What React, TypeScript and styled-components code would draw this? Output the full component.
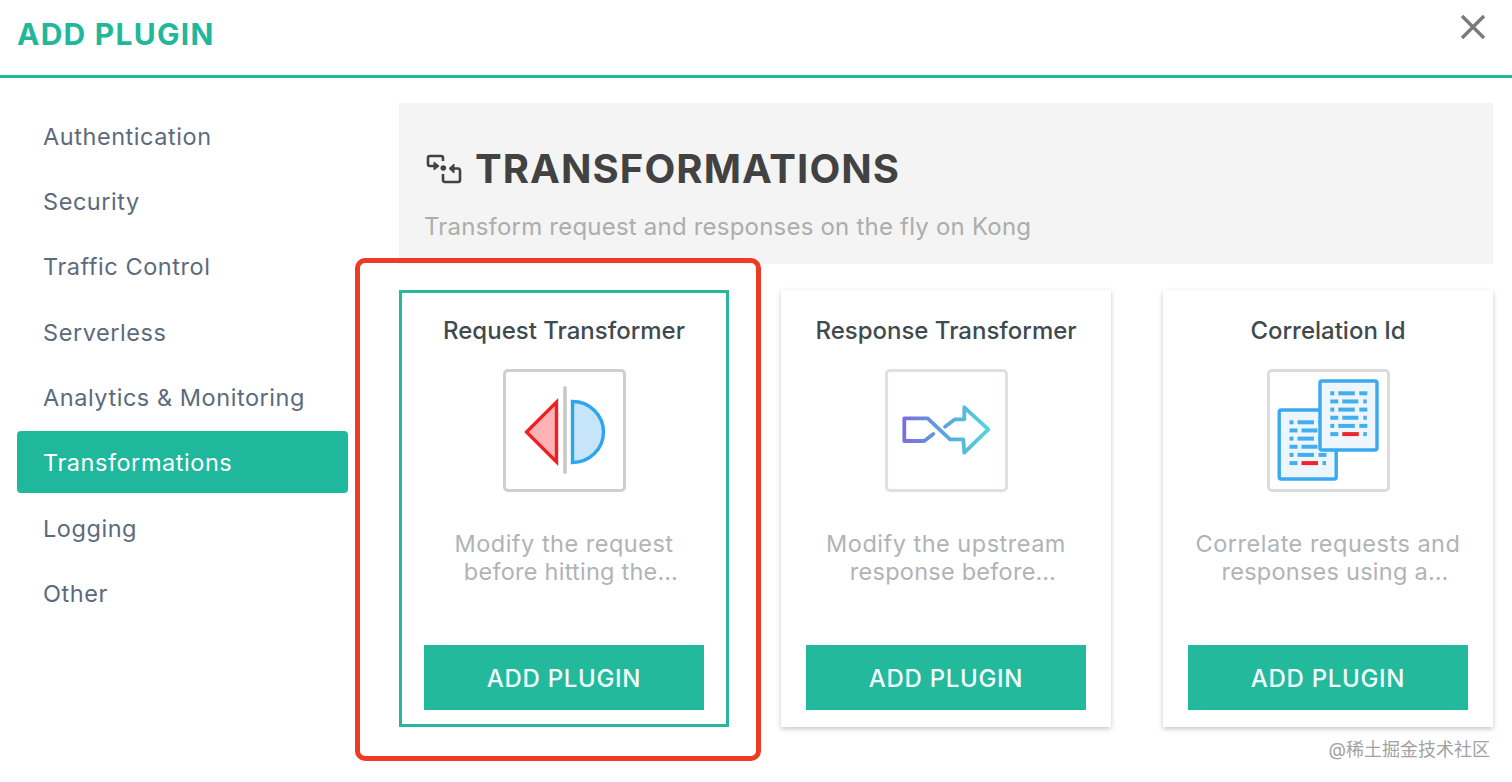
import React from "react";
import styled, { createGlobalStyle } from "styled-components";

const font = `Inter, "Noto Sans CJK SC", sans-serif`;

const Global = createGlobalStyle`
  html, body { margin: 0; padding: 0; background: #fff; }
  * { box-sizing: border-box; }
  body { font-family: ${font}; overflow: hidden; }
`;

const Page = styled.div`
  position: relative;
  width: 1512px;
  height: 782px;
  display: flex;
  flex-direction: column;
  background: #fff;
  overflow: hidden;
`;
const Header = styled.header`
  height: 78px;
  flex: none;
  border-bottom: 3px solid #20b89c;
  display: flex;
  align-items: flex-start;
  justify-content: space-between;
  padding: 15px 25px 0 17px;
`;
const Title = styled.h1`
  margin: 0;
  font-size: 30px;
  line-height: 38px;
  font-weight: 700;
  letter-spacing: 1.25px;
  color: #22b79b;
`;
const Close = styled.button`
  border: 0;
  background: none;
  padding: 0;
  margin-top: -2px;
  width: 28px;
  height: 28px;
  display: flex;
`;
const Body = styled.div`
  flex: 1;
  display: flex;
  min-height: 0;
`;
const Side = styled.nav`
  width: 399px;
  flex: none;
  padding: 26px 51px 0 17px;
  display: flex;
  flex-direction: column;
  gap: 3.4px;
`;
const SideItem = styled.div<{ $active?: boolean }>`
  height: 62px;
  flex: none;
  display: flex;
  align-items: center;
  padding: 2px 0 0 26px;
  border-radius: 4px;
  font-size: 23.5px;
  letter-spacing: 0.55px;
  font-weight: 400;
  color: ${(p) => (p.$active ? "#fff" : "#5c6a7d")};
  background: ${(p) => (p.$active ? "#20b89c" : "transparent")};
`;
const Main = styled.main`
  width: 1094px;
  flex: none;
  padding-top: 25px;
  display: flex;
  flex-direction: column;
  gap: 26px;
`;
const Hero = styled.section`
  height: 161px;
  flex: none;
  background: #f4f4f4;
  padding: 42px 25px 0;
`;
const HeroTitle = styled.h2`
  margin: 0;
  display: flex;
  align-items: center;
  gap: 13px;
  height: 48px;
  font-size: 40px;
  line-height: 48px;
  font-weight: 700;
  letter-spacing: 1.07px;
  color: #424242;
`;
const HeroMark = styled.svg`
  margin-left: 2px;
  flex: none;
`;
const HeroText = styled.p`
  margin: 17px 0 0;
  font-size: 24px;
  line-height: 34px;
  letter-spacing: 0.21px;
  color: #adadad;
`;
const Cards = styled.div`
  display: grid;
  grid-template-columns: repeat(3, 330px);
  justify-content: space-between;
`;
const Card = styled.article<{ $selected?: boolean }>`
  height: 437px;
  display: flex;
  flex-direction: column;
  align-items: center;
  background: #fff;
  border: ${(p) => (p.$selected ? "3px solid #2bb59c" : "0")};
  padding: ${(p) => (p.$selected ? "21px 22px 14px" : "24px 25px 17px")};
  box-shadow: ${(p) => (p.$selected ? "none" : "0 2px 5px rgba(0,0,0,0.22)")};
`;
const CardTitle = styled.h3`
  margin: 0;
  height: 34px;
  font-size: 24px;
  line-height: 34px;
  font-weight: 500;
  color: #3f4a4f;
  white-space: nowrap;
`;
const IconFrame = styled.div<{ $tone: string }>`
  margin-top: 21px;
  width: 123px;
  height: 123px;
  flex: none;
  border: 3px solid ${(p) => p.$tone};
  border-radius: 5px;
  display: flex;
  align-items: center;
  justify-content: center;
  background: #fff;
`;
const Desc = styled.p`
  margin: 38px 0 0;
  width: 280px;
  height: 92px;
  text-align: center;
  font-size: 23.5px;
  line-height: 28px;
  letter-spacing: 0.5px;
  color: #b0b3b7;
`;
const DescTail = styled.span`
  display: inline-block;
  padding-left: 14px;
  letter-spacing: 0.25px;
`;
const AddButton = styled.button`
  width: 280px;
  height: 65px;
  flex: none;
  margin-top: auto;
  padding: 2px 0 0;
  border: 0;
  background: #22b99d;
  color: #f4fffd;
  font-family: ${font};
  font-size: 24px;
  font-weight: 500;
  letter-spacing: 0.7px;
`;
const Highlight = styled.div`
  position: absolute;
  left: 355px;
  top: 258px;
  width: 406px;
  height: 503px;
  border: 5px solid #ef3a24;
  border-radius: 10px;
  pointer-events: none;
`;
const Watermark = styled.div`
  position: absolute;
  right: 22px;
  top: 739px;
  font-size: 18px;
  line-height: 22px;
  color: #a2a2a2;
  white-space: nowrap;
`;

const CloseIcon = () => (
  <svg width="28" height="28" viewBox="0 0 28 28" fill="none">
    <path d="M3 3 L25 25 M25 3 L3 25" stroke="#7a7a7a" strokeWidth="3.4" />
  </svg>
);
const HeroIcon = () => (
  <HeroMark width="36" height="30" viewBox="0 0 36 30" fill="none" stroke="#424242" strokeWidth="2.6">
    <path d="M10 12 H4 Q2 12 2 10 V4 Q2 2 4 2 H15 Q17 2 17 4 V7" />
    <path d="M8 8 L13 12 L8 16 Z" fill="#424242" strokeWidth="1" />
    <path d="M17 20 V25.5 Q17 28 19 28 H32 Q34 28 34 26 V17 Q34 14.5 32 14.5 H27" />
    <path d="M28 10 L23 14.5 L28 19 Z" fill="#424242" strokeWidth="1" />
    <circle cx="17.3" cy="14" r="2.8" fill="#424242" stroke="none" />
  </HeroMark>
);
const RequestIcon = () => (
  <svg width="117" height="117" viewBox="0 0 117 117" fill="none">
    <rect x="57.2" y="14" width="3.6" height="88" rx="1.8" fill="#c9c9c9" />
    <path d="M50.5 30 V90 L20.5 60 Z" fill="#fdb3b3" stroke="#f01f25" strokeWidth="3.4" />
    <path d="M66.5 29.5 A31 30.5 0 0 1 66.5 90.5 Z" fill="#c6e5fb" stroke="#2ea7ea" strokeWidth="3.4" />
  </svg>
);
const ResponseIcon = () => (
  <svg width="117" height="117" viewBox="0 0 117 117" fill="none">
    <defs>
      <linearGradient id="flow" x1="16" x2="100" y1="0" y2="0" gradientUnits="userSpaceOnUse">
        <stop offset="0" stopColor="#7a6fe0" />
        <stop offset="0.5" stopColor="#5ba6de" />
        <stop offset="1" stopColor="#4fd6dc" />
      </linearGradient>
    </defs>
    <path
      d="M45.3 62 L36.3 69 H16.3 V46.3 H39.7 L62 67.3 H75.3 L76.3 80.7 L100.3 57.3 L76.3 35.3 V47.3 H67 L57 54.7"
      stroke="url(#flow)"
      strokeWidth="3.8"
      strokeLinejoin="round"
      strokeLinecap="round"
    />
  </svg>
);
const docRows: [number, number][][] = [
  [[12, 4], [20, 16.5], [41, 8]],
  [[12, 8], [24, 16], [45, 3.5]],
  [[12, 4], [20, 16.5], [41, 8]],
  [[12, 8], [24, 16], [45, 3.5]],
  [[12, 4], [20, 16.5], [41, 8]],
];
const Doc = ({ x, y }: { x: number; y: number }) => (
  <g transform={`translate(${x} ${y})`}>
    <rect x="1.7" y="1.7" width="57" height="69" rx="2" fill="#eef6fd" stroke="#3aa9ee" strokeWidth="3.4" />
    {docRows.map((r, i) =>
      r.map(([a, w], j) => <rect key={`${i}-${j}`} x={a} y={12 + i * 8.15} width={w} height="4" fill="#43aeee" />)
    )}
    <rect x="12" y="52.8" width="8" height="4" fill="#43aeee" />
    <rect x="24" y="52.8" width="16.5" height="4" fill="#e8262c" />
    <rect x="45" y="52.8" width="3.5" height="4" fill="#43aeee" />
  </g>
);
const CorrelationIcon = () => (
  <svg width="117" height="117" viewBox="0 0 117 117" fill="none">
    <Doc x={7.5} y={36.3} />
    <Doc x={48.3} y={7.3} />
  </svg>
);

const items = ["Authentication", "Security", "Traffic Control", "Serverless", "Analytics & Monitoring", "Transformations", "Logging", "Other"];
const plugins = [
  { name: "Request Transformer", lead: "Modify the request", tail: "before hitting the…", tone: "#cfcfcf", icon: <RequestIcon />, selected: true },
  { name: "Response Transformer", lead: "Modify the upstream", tail: "response before…", tone: "#dde0e5", icon: <ResponseIcon /> },
  { name: "Correlation Id", lead: "Correlate requests and", tail: "responses using a…", tone: "#dcdcdc", icon: <CorrelationIcon /> },
];

export default function App() {
  return (
    <Page>
      <Global />
      <Header>
        <Title>ADD PLUGIN</Title>
        <Close aria-label="Close"><CloseIcon /></Close>
      </Header>
      <Body>
        <Side>
          {items.map((t) => (
            <SideItem key={t} $active={t === "Transformations"}>{t}</SideItem>
          ))}
        </Side>
        <Main>
          <Hero>
            <HeroTitle><HeroIcon />TRANSFORMATIONS</HeroTitle>
            <HeroText>Transform request and responses on the fly on Kong</HeroText>
          </Hero>
          <Cards>
            {plugins.map((p) => (
              <Card key={p.name} $selected={p.selected}>
                <CardTitle>{p.name}</CardTitle>
                <IconFrame $tone={p.tone}>{p.icon}</IconFrame>
                <Desc>
                  {p.lead}
                  <br />
                  <DescTail>{p.tail}</DescTail>
                </Desc>
                <AddButton>ADD PLUGIN</AddButton>
              </Card>
            ))}
          </Cards>
        </Main>
      </Body>
      <Highlight />
      <Watermark>@稀土掘金技术社区</Watermark>
    </Page>
  );
}
